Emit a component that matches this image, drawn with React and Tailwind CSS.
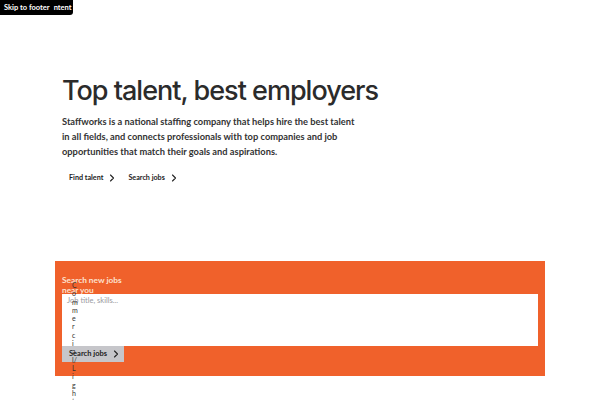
import React from "react";

const Chevron = ({ className = "" }) => (
  <svg width="6" height="8" viewBox="0 0 6 8" className={className} fill="none">
    <path d="M1.5 1l3 3-3 3" stroke="currentColor" strokeWidth="1.1" strokeLinecap="round" strokeLinejoin="round" />
  </svg>
);

export default function App() {
  const vertical = "Commercial/Lighting";

  return (
    <div className="relative min-h-screen bg-white overflow-hidden" style={{ fontFamily: "Lato, 'Noto Sans', sans-serif" }}>
      {/* skip links */}
      <div className="absolute left-0 top-0 z-20 flex h-[15px] w-[73px] items-center whitespace-nowrap rounded-br-[3px] bg-black pl-[4px] text-[7.5px] font-bold text-white">
        <span>Skip to footer</span>
        <span className="ml-[4px]">ntent</span>
      </div>

      {/* hero */}
      <section className="px-[62px] pt-[74px]">
        <h1 className="text-[27px] font-medium leading-[34px] tracking-[-1px] text-[#2b2b2b]" style={{ fontFamily: "Inter, 'Noto Sans', sans-serif" }}>
          Top talent, best employers
        </h1>
        <p className="mt-[6px] w-[294px] text-[9.3px] font-bold leading-[15px] text-[#333]">
          Staffworks is a national staffing company that helps hire the best talent in all fields, and connects professionals with top companies and job opportunities that match their goals and aspirations.
        </p>
        <div className="mt-[11px] flex h-[16px] items-center text-[7.2px] font-bold text-[#222]">
          <a className="flex items-center gap-[6px] px-[7px]">
            Find talent <Chevron />
          </a>
          <a className="ml-[-1px] flex items-center gap-[6px] px-[7px]">
            Search jobs <Chevron />
          </a>
        </div>
      </section>

      {/* search box */}
      <section className="relative mx-[55px] mt-[75px] bg-[#f0612b] px-[7px] pb-[14px] pt-[14px]">
        <h2 className="h-[19px] w-[68px] text-[8.3px] font-bold leading-[10px] text-[#fde2cf]">
          Search new jobs near you
        </h2>
        <div className="h-[52px] w-full bg-white pl-[5px] pt-[1px] text-[7.5px] text-[#9a9aa0]">
          Job title, skills...
        </div>
        <button className="flex h-[16px] w-[62px] items-center gap-[6px] bg-[#c6c6ca] pl-[7px] text-[7.5px] font-bold text-[#222]">
          Search jobs <Chevron />
        </button>
        <div className="absolute left-[17px] top-[20px] z-10 w-[1px] break-all text-[7px] leading-[8.3px] text-[#333]">
          {vertical}
        </div>
      </section>
    </div>
  );
}
